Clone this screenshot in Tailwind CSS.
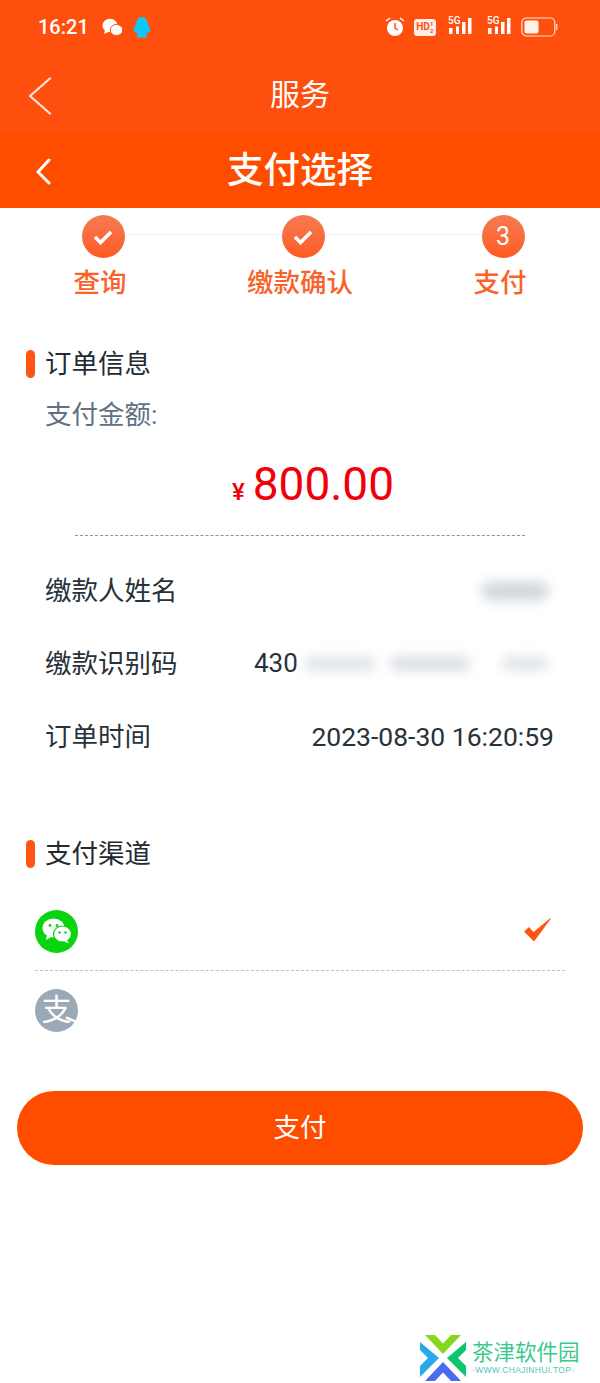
<!DOCTYPE html>
<html lang="zh-CN">
  <head>
    <meta charset="UTF-8" />
    <meta name="viewport" content="width=device-width, initial-scale=1.0" />
    <title>支付选择</title>
    <script src="https://cdn.jsdelivr.net/npm/@tailwindcss/browser@4"></script>
  </head>
  <body class="bg-white font-['Roboto','Noto_Sans_CJK_SC',sans-serif]">
    <main class="relative w-[600px] h-[1383px] overflow-hidden bg-white">
      <!-- app header -->
      <header class="h-[208px] bg-[#ff4f0f]">
        <div class="h-[54px] flex items-center pl-[38px] pr-[42px] text-white">
          <span class="text-[20px] leading-none font-medium w-[52px]">16:21</span>
          <svg class="ml-[12px] w-[21px] h-[19px]" viewBox="0 0 21 19" fill="#fff">
            <ellipse cx="8" cy="7.500" rx="7.500" ry="6.800" />
            <path d="M3 12l-1 4 4.500-2z" />
            <ellipse cx="14.500" cy="12" rx="6.300" ry="5.600" stroke="#ff4f0f" stroke-width="1" />
          </svg>
          <svg class="ml-[10px] w-[18px] h-[21px]" viewBox="0 0 18 21" fill="#10c8f5">
            <path d="M9 0C5 0 3.500 3 3.300 6.500 1.800 9 .5 12 .8 14.500c.4 1.700 1.500 1 2.200-.2.400 1.400 1 2.700 2 3.500-1.300.6-1.500 3.200 1.300 3.200 1.200 0 2.200-.4 2.700-.9.500.5 1.500.9 2.700.9 2.800 0 2.600-2.600 1.300-3.200 1-.8 1.600-2.100 2-3.500.7 1.200 1.800 1.900 2.200.2.300-2.500-1-5.500-2.500-8C14.500 3 13 0 9 0z" />
          </svg>
          <div class="ml-auto flex items-center">
            <svg class="w-[20px] h-[20px]" viewBox="0 0 20 20">
              <circle cx="10" cy="11" r="8" fill="#fff" />
              <path d="M1 4l4-3M19 4l-4-3" stroke="#fff" stroke-width="1.500" />
              <path d="M10 6v5l3 2" stroke="#ff4f0f" stroke-width="1.500" fill="none" />
            </svg>
            <div class="ml-[9px] w-[22px] h-[17px] rounded-[3px] bg-white/90 text-[#ff4f0f] flex items-center justify-center font-bold">
              <span class="text-[10px] leading-none">HD</span>
              <span class="text-[6px] leading-[7px] w-[4px] text-center">1<br />2</span>
            </div>
            <div class="ml-[12px] relative w-[24px] h-[22px]">
              <span class="absolute left-0 top-[-1px] text-[10px] leading-[11px] font-medium">5G</span>
              <svg class="w-[24px] h-[22px]" viewBox="0 0 24 22" fill="#fff">
                <rect x="1" y="12" width="3.500" height="6" /><rect x="8" y="10.500" width="3" height="7.500" /><rect x="14" y="6" width="3.500" height="12" /><rect x="20" y="2" width="3.500" height="16" />
              </svg>
            </div>
            <div class="ml-[15px] relative w-[24px] h-[22px]">
              <span class="absolute left-0 top-[-1px] text-[10px] leading-[11px] font-medium">5G</span>
              <svg class="w-[24px] h-[22px]" viewBox="0 0 24 22" fill="#fff">
                <rect x="1" y="12" width="3.500" height="6" /><rect x="8" y="10.500" width="3" height="7.500" /><rect x="14" y="6" width="3.500" height="12" /><rect x="20" y="2" width="3.500" height="16" />
              </svg>
            </div>
            <svg class="ml-[10px] w-[37px] h-[20px]" viewBox="0 0 37 20">
              <rect x=".8" y="1" width="33" height="18" rx="4.500" fill="none" stroke="#ffe3d5" stroke-width="1.200" />
              <rect x="3.500" y="3.500" width="14" height="13" rx="2" fill="#fff3e8" />
              <rect x="35" y="7" width="1.500" height="6" fill="#ffd3bd" />
            </svg>
          </div>
        </div>
        <div class="relative h-[80px] flex items-center justify-center">
          <svg class="absolute left-[28px] top-[23px] w-[24px] h-[38px]" viewBox="0 0 24 38" fill="none" stroke="#ffe9df" stroke-width="2.200" stroke-linecap="round" stroke-linejoin="round">
            <path d="M22 1.500L2 19l20 17.500" />
          </svg>
          <span class="text-white text-[30px] leading-none pt-[2px]">服务</span>
        </div>
        <div class="relative h-[74px] bg-[#ff4d00] flex items-center justify-center">
          <svg class="absolute left-[35px] top-[24px] w-[17px] h-[27px]" viewBox="0 0 17 27" fill="none" stroke="#fff" stroke-width="3" stroke-linecap="round" stroke-linejoin="round">
            <path d="M14 2L3 14l11 11" />
          </svg>
          <span class="text-white text-[36.500px] leading-none font-medium">支付选择</span>
        </div>
      </header>

      <!-- steps -->
      <section class="relative grid grid-cols-3 pt-[7px] h-[90px]">
        <div class="absolute left-[125px] w-[356px] top-[26px] h-px bg-[#eef1f4]"></div>
        <div class="relative flex flex-col items-center">
          <div class="ml-[6px] w-[43px] h-[43px] rounded-full bg-gradient-to-b from-[#f47a52] to-[#ff5a1e] flex items-center justify-center">
            <svg class="w-[20px] h-[16px]" viewBox="0 0 20 16" fill="none" stroke="#fff" stroke-width="3.600"><path d="M2 8l5.500 5.500L18 3" /></svg>
          </div>
          <span class="mt-[7px] text-[26.500px] leading-[36px] font-medium text-[#f9632a]">查询</span>
        </div>
        <div class="relative flex flex-col items-center">
          <div class="ml-[6px] w-[43px] h-[43px] rounded-full bg-gradient-to-b from-[#f47a52] to-[#ff5a1e] flex items-center justify-center">
            <svg class="w-[20px] h-[16px]" viewBox="0 0 20 16" fill="none" stroke="#fff" stroke-width="3.600"><path d="M2 8l5.500 5.500L18 3" /></svg>
          </div>
          <span class="mt-[7px] text-[26.500px] leading-[36px] font-medium text-[#f9632a]">缴款确认</span>
        </div>
        <div class="relative flex flex-col items-center">
          <div class="ml-[6px] w-[43px] h-[43px] rounded-full bg-gradient-to-b from-[#f47a52] to-[#ff5a1e] flex items-center justify-center text-white text-[25px] leading-none">3</div>
          <span class="mt-[7px] text-[26.500px] leading-[36px] font-medium text-[#f9632a]">支付</span>
        </div>
      </section>

      <!-- order info -->
      <section class="pt-[46px]">
        <div class="flex items-center h-[40px] pl-[26px]">
          <span class="w-[9px] h-[28px] rounded-full bg-[#ff5512]"></span>
          <h2 class="ml-[10px] text-[26.500px] leading-[40px] text-[#222b33]">订单信息</h2>
        </div>
        <p class="mt-[11px] pl-[45px] text-[26.500px] leading-[40px] text-[#5f7283]">支付金额:</p>
        <div class="mt-[16px] h-[66px] flex items-baseline justify-center text-[#f00008] pl-[28px] pr-[2px]">
          <span class="text-[24px] leading-none mr-[8px] font-medium">¥</span>
          <span class="text-[46px] leading-[66px]">800.00</span>
        </div>
        <div class="mt-[18px] mx-[75px] border-t border-dashed border-[#8f9498]"></div>
        <div class="mt-[18px] pl-[45px] pr-[46px] text-[26.500px] text-[#28323a]">
          <div class="h-[73px] flex items-center justify-between">
            <span>缴款人姓名</span>
            <span class="w-[68px] h-[20px] mr-[5px] rounded-full bg-[#d3d8de] blur-[6px]"></span>
          </div>
          <div class="h-[73px] flex items-center">
            <span class="w-[209px]">缴款识别码</span>
            <span class="text-[26px]">430</span>
            <span class="ml-[6px] w-[72px] h-[15px] rounded-full bg-[#e1e5e9] blur-[6px]"></span>
            <span class="ml-[14px] w-[80px] h-[15px] rounded-full bg-[#dadee4] blur-[6px]"></span>
            <span class="ml-[32px] w-[46px] h-[15px] rounded-full bg-[#e1e5e9] blur-[6px]"></span>
          </div>
          <div class="h-[73px] flex items-center justify-between">
            <span>订单时间</span>
            <span>2023-08-30 16:20:59</span>
          </div>
        </div>
      </section>

      <!-- pay channel -->
      <section class="pt-[61px]">
        <div class="flex items-center h-[40px] pl-[26px]">
          <span class="w-[9px] h-[28px] rounded-full bg-[#ff5512]"></span>
          <h2 class="ml-[10px] text-[26.500px] leading-[40px] text-[#222b33]">支付渠道</h2>
        </div>
        <div class="mx-[35px] mt-[18px]">
          <div class="h-[79px] flex items-center justify-between border-b border-dashed border-[#b9c0c8]">
            <div class="w-[43px] h-[43px] rounded-full bg-[#09d40f] flex items-center justify-center">
              <svg class="w-[30px] h-[26px]" viewBox="0 0 30 26">
                <ellipse cx="11.500" cy="10" rx="11" ry="9.500" fill="#fff" />
                <path d="M5 16l-1 6 6-3.500z" fill="#fff" />
                <ellipse cx="20.500" cy="16" rx="9" ry="8" fill="#fff" stroke="#09d40f" stroke-width="1.200" />
                <path d="M25 22l2 3.500-5-2z" fill="#fff" />
                <circle cx="8" cy="7.500" r="1.400" fill="#09d40f" /><circle cx="15" cy="7.500" r="1.400" fill="#09d40f" />
                <circle cx="17.500" cy="14.500" r="1.200" fill="#09d40f" /><circle cx="23.500" cy="14.500" r="1.200" fill="#09d40f" />
              </svg>
            </div>
            <svg class="w-[28px] h-[24px] mr-[13px] mb-[2px]" viewBox="0 0 28 24" fill="#ff5512">
              <path d="M0 13.500L5 9l4.500 5L26.500 0 27 .6 10 23.500z" />
            </svg>
          </div>
          <div class="h-[78px] flex items-center">
            <div class="relative w-[43px] h-[43px] rounded-full overflow-hidden bg-[#9aa9b5] flex items-center justify-center text-white text-[30px] leading-none">
              支
              <svg class="absolute left-0 top-0 w-[43px] h-[43px]" viewBox="0 0 43 43" fill="none" stroke="#fff" stroke-width="2.500">
                <path d="M31 28.500l14 6" />
              </svg>
            </div>
          </div>
        </div>
      </section>

      <div class="mx-[17px] mt-[42px] h-[74px] rounded-full bg-[#ff4d00] flex items-center justify-center text-white text-[26.500px]">支付</div>

      <!-- watermark -->
      <div class="absolute left-[420px] top-[1335px] w-[170px] h-[46px]">
        <svg class="absolute left-0 top-0 w-[46px] h-[46px]" viewBox="0 0 46 46">
          <path d="M5 0h10l8 8.500L31 0h10L23 19z" fill="#86d81f" />
          <path d="M0 7l19 16L0 42V31l8-8-8-8z" fill="#29a8ea" />
          <path d="M46 7L27 23l19 19V31l-8-8 8-8z" fill="#0cc56c" />
          <path d="M5 46h10l8-8.500 8 8.500h10L23 27z" fill="#4b6bf0" />
        </svg>
        <span class="absolute left-[52px] top-[4px] whitespace-nowrap text-[21.500px] leading-[28px] text-[#3bc98f]">茶津软件园</span>
        <span class="absolute left-[52px] top-[29px] whitespace-nowrap text-[8.500px] leading-[12px] tracking-[.3px] text-[#54c6bc] font-['Liberation_Sans',sans-serif]">·WWW.CHAJINHUI.TOP·</span>
      </div>
    </main>
  </body>
</html>
